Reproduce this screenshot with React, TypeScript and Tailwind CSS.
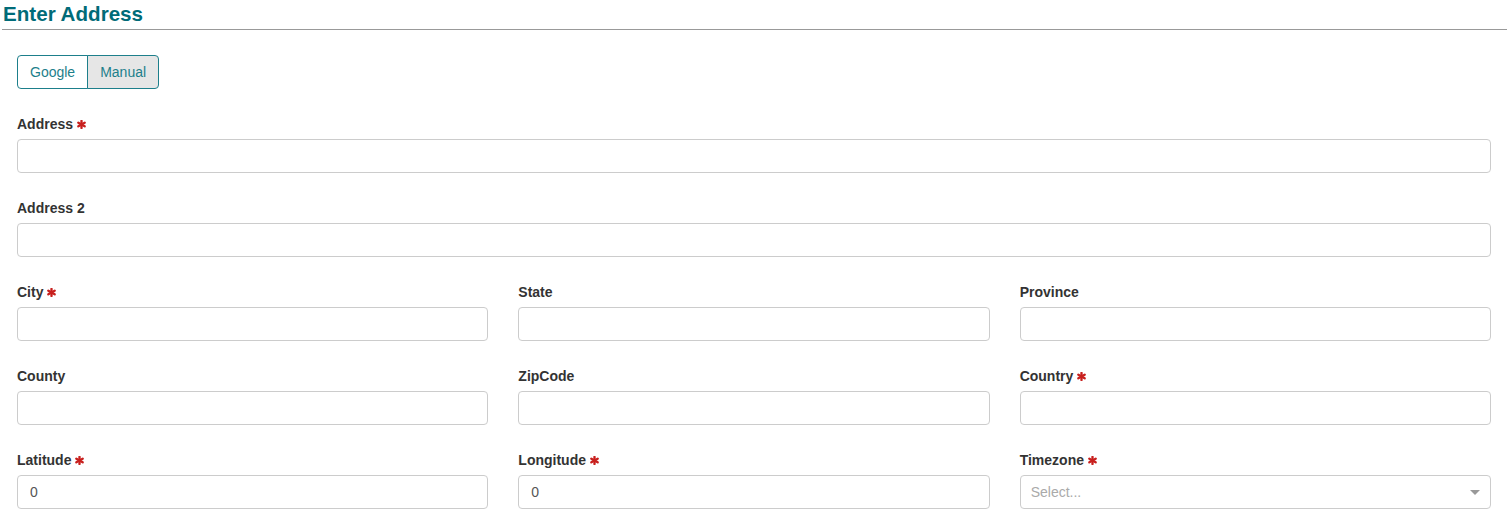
import React from 'react';

const font = { fontFamily: '"Liberation Sans", Arial, sans-serif' };

function Required() {
  return (
    <svg viewBox="0 0 10 10" className="ml-[4px] inline-block h-[9px] w-[9px] align-[-0px]">
      <g stroke="#c8201e" strokeWidth="2.6" strokeLinecap="round">
        <line x1="5" y1="1" x2="5" y2="9" />
        <line x1="1.5" y1="3" x2="8.5" y2="7" />
        <line x1="1.5" y1="7" x2="8.5" y2="3" />
      </g>
    </svg>
  );
}

interface FieldProps {
  label: string;
  required?: boolean;
  value?: string;
  select?: boolean;
}

function Field({ label, required = false, value = '', select = false }: FieldProps) {
  return (
    <div className="flex flex-col">
      <label className="mb-[5px] h-5 text-[14px] leading-5 font-bold text-[#333]">
        {label}
        {required && <Required />}
      </label>
      {select ? (
        <div className="flex h-[34px] items-center justify-between rounded-[4px] border border-[#ccc] bg-white pl-[10px] pr-[10px]">
          <span className="text-[14px] text-[#aaa]">Select...</span>
          <svg viewBox="0 0 10 5" className="h-[5px] w-[10px]">
            <polygon points="0,0 10,0 5,5" fill="#999" />
          </svg>
        </div>
      ) : (
        <input
          readOnly
          value={value}
          className="h-[34px] rounded-[4px] border border-[#ccc] bg-white px-3 text-[14px] text-[#555] outline-none"
          style={font}
        />
      )}
    </div>
  );
}

export default function App() {
  return (
    <div className="min-h-[532px] w-full bg-white" style={font}>
      <div className="mx-[2px] h-[30px] border-b border-[#999]">
        <h1 className="pl-[1px] pt-[1px] text-[20.6px] leading-[26px] font-bold text-[#006b78]">Enter Address</h1>
      </div>

      <div className="pl-[17px] pr-[18px] pt-[25px]">
        <div className="flex">
          <button className="h-[34px] rounded-l-[4px] border border-[#1d7f8b] bg-white px-3 text-[14px] text-[#1d7f8b]">
            Google
          </button>
          <button className="-ml-px h-[34px] rounded-r-[4px] border border-[#1d7f8b] bg-[#e6e6e6] px-3 text-[14px] text-[#1d7f8b]">
            Manual
          </button>
        </div>

        <div className="mt-[25px] flex flex-col gap-[25px]">
          <Field label="Address" required />
          <Field label="Address 2" />
          <div className="grid grid-cols-3 gap-x-[30px] gap-y-[25px]">
            <Field label="City" required />
            <Field label="State" />
            <Field label="Province" />
            <Field label="County" />
            <Field label="ZipCode" />
            <Field label="Country" required />
            <Field label="Latitude" required value="0" />
            <Field label="Longitude" required value="0" />
            <Field label="Timezone" required select />
          </div>
        </div>
      </div>
    </div>
  );
}
